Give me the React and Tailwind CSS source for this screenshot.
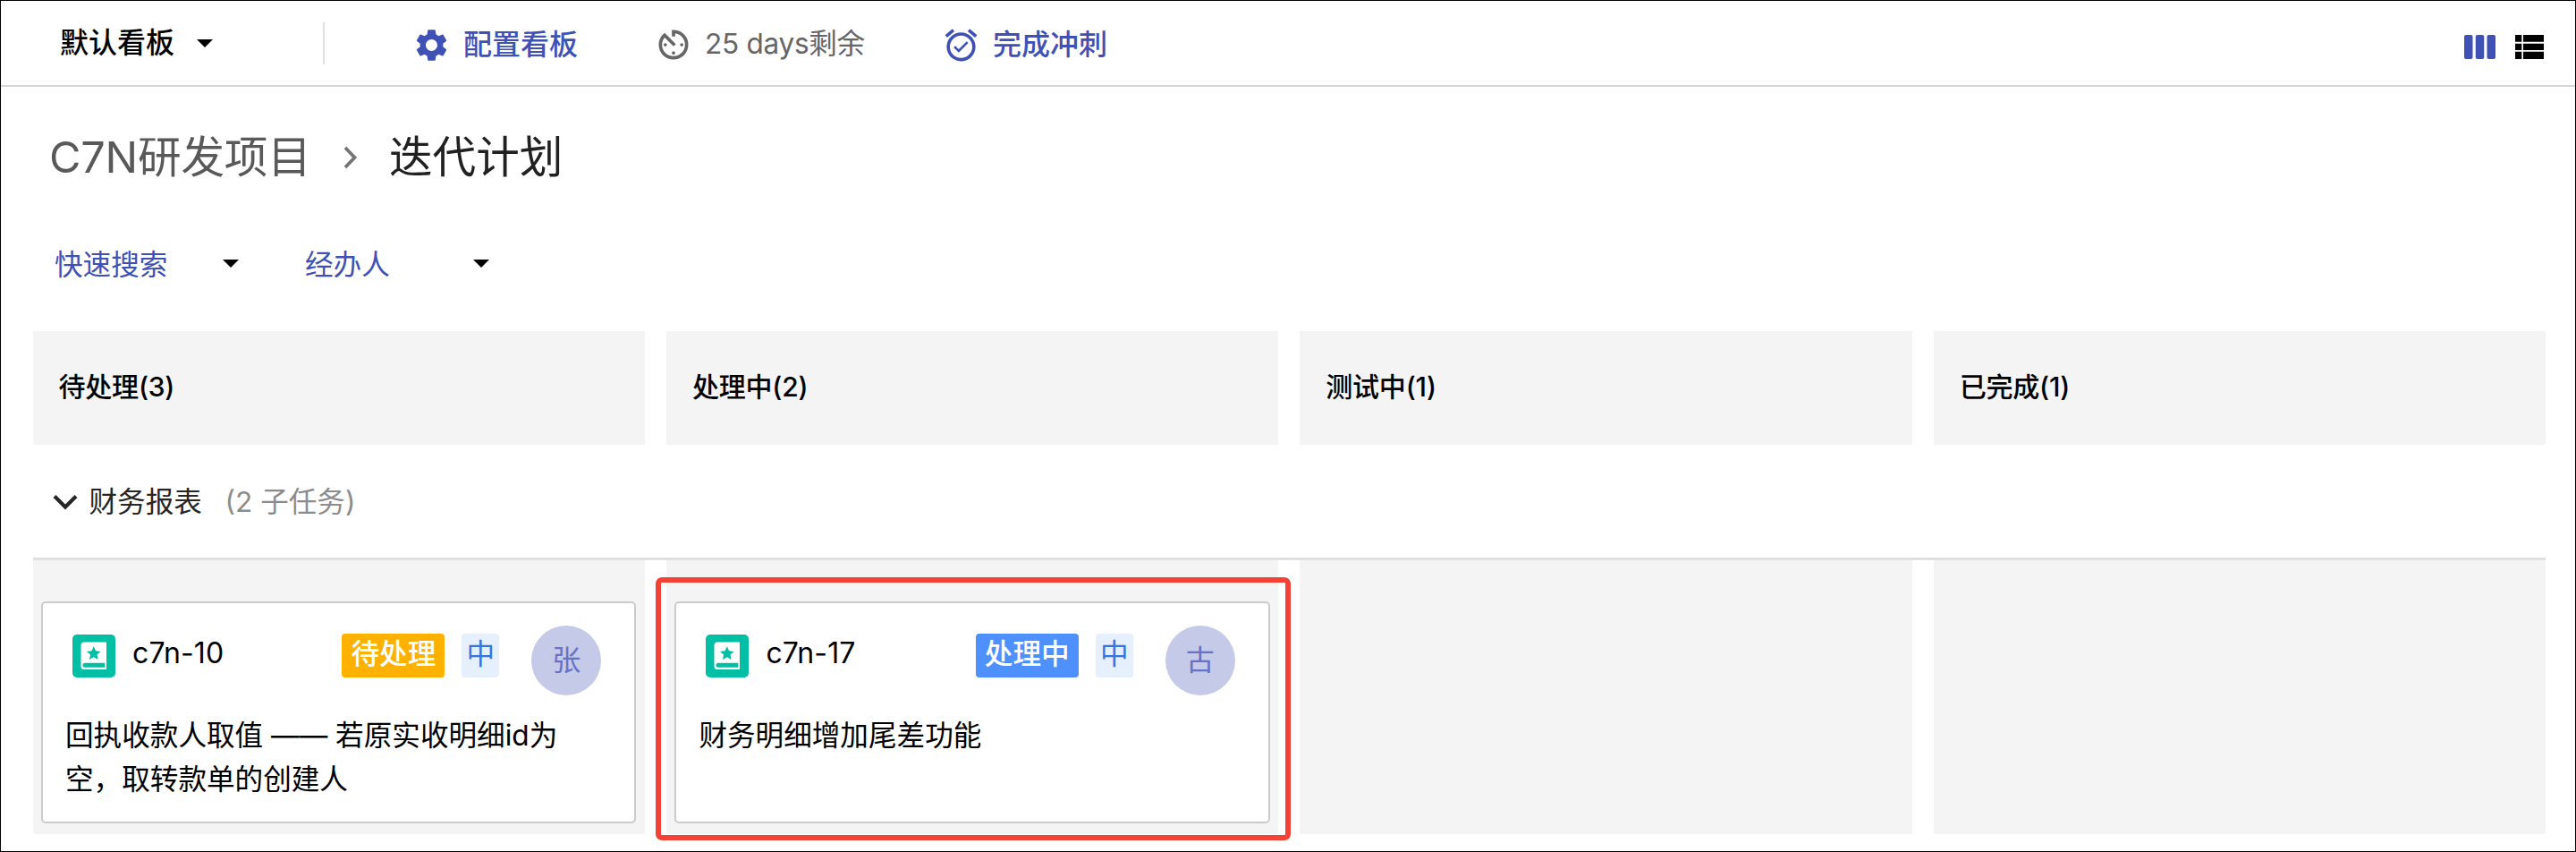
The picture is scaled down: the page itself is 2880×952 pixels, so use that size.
import { MdAlarmOn, MdAvTimer, MdSettings } from "react-icons/md";

const columns = ["待处理(3)", "处理中(2)", "测试中(1)", "已完成(1)"];

function Caret({ className = "" }) {
  return (
    <svg className={`h-[9px] w-[18px] shrink-0 ${className}`} viewBox="0 0 18 9">
      <path d="M0 0h18L9 9z" fill="#000" />
    </svg>
  );
}

function StoryIcon() {
  return (
    <svg className="h-12 w-12 shrink-0" viewBox="0 0 48 48">
      <rect width="48" height="48" rx="5" fill="#00bfa5" />
      <path
        d="M13 8.500h25V39H13a3.500 3.500 0 0 1-3.500-3.500V12A3.500 3.500 0 0 1 13 8.500z"
        fill="#fff"
      />
      <path d="M14 31.700h22.300v5H14a2.500 2.500 0 0 1 0-5z" fill="#00bfa5" />
      <path
        d="M23.800 13.300l2.300 5 5.500.6-4.100 3.700 1.200 5.500-4.900-2.800-4.900 2.800 1.200-5.500-4.100-3.700 5.500-.6z"
        fill="#00bfa5"
      />
    </svg>
  );
}

function Card({ id, status, statusClass, owner, children }) {
  return (
    <article className="mx-[9.500px] mt-[46px] h-[248px] rounded-[5px] border-2 border-[#cbcbcb] bg-white">
      <div className="mt-[25px] flex h-[78px] items-center pl-[33px] pr-[37px]">
        <div className="flex flex-1 items-center pb-[11px]">
          <StoryIcon />
          <span className="ml-[19px] h-12 text-[32px] leading-[42px] tracking-[0.1px]">{id}</span>
          <span
            className={`ml-auto flex h-[49px] w-[115px] items-center justify-center rounded-[4px] pb-[3px] text-[31.600px] font-medium text-white ${statusClass}`}
          >
            {status}
          </span>
          <span className="ml-[19px] mr-[36px] flex h-[49px] w-[42px] items-center justify-center rounded-[4px] bg-[#e6effc] pb-[3px] text-[31.600px] text-[#3575df]">
            中
          </span>
        </div>
        <span className="flex h-[78px] w-[78px] items-center justify-center rounded-full bg-[#c5cae9] text-[32px] text-[#6473c3]">
          {owner}
        </span>
      </div>
      <p className="ml-[25px] mt-[20px] text-[31.600px] leading-[49px]">{children}</p>
    </article>
  );
}

export default function App() {
  return (
    <div className="h-[952px] w-[2880px] overflow-hidden border border-black bg-white font-['Inter','Noto_Sans_CJK_SC',sans-serif] text-black">
      <header className="flex h-24 items-center border-b-2 border-[#d5d5d5] text-[32px] leading-[48px] whitespace-nowrap">
        <span className="ml-[66px] w-[128px] font-medium">默认看板</span>
        <Caret className="ml-[25px]" />
        <span className="ml-[123px] h-[47px] w-[2px] bg-[#e0e0e0]" />
        <button className="ml-[98px] flex items-center font-medium text-[#3f51b5]">
          <MdSettings className="mt-[4px] size-[43px]" />
          <span className="ml-[14px] mt-[4px] w-[128px]">配置看板</span>
        </button>
        <span className="ml-[85px] flex items-center text-[#666]">
          <MdAvTimer className="mt-[4px] size-[44px]" />
          <span className="ml-[13px] mt-[1px] w-[180px] text-[31.600px] tracking-[-0.3px]">25 days剩余</span>
        </span>
        <button className="ml-[85px] flex items-center font-medium text-[#3f51b5]">
          <MdAlarmOn className="mt-[4px] size-[43px]" />
          <span className="ml-[14px] mt-[4px] w-[128px]">完成冲刺</span>
        </button>
        <div className="ml-auto mr-[35px] mt-[9px] flex items-center gap-[22px]">
          <svg className="h-[27px] w-[35px]" viewBox="0 0 35 27" fill="#3f51b5">
            <rect width="9.500" height="27" rx="2" />
            <rect x="12.750" width="9.500" height="27" rx="2" />
            <rect x="25.500" width="9.500" height="27" rx="2" />
          </svg>
          <svg className="h-[27px] w-[32px]" viewBox="0 0 32 27" fill="#000">
            <path d="M0 0h7.300v7.700H0zM9 0h23v7.700H9zM0 9.700h7.300v7.300H0zM9 9.700h23V17H9zM0 18.700h7.300V27H0zM9 18.700h23V27H9z" />
          </svg>
        </div>
      </header>

      <nav className="mt-[43px] flex h-[72px] items-center pl-[54px] text-[48.600px] leading-[72px]">
        <span className="w-[289px] tracking-[-0.2px] whitespace-nowrap text-[#595959]">C7N研发项目</span>
        <svg className="ml-[40px] h-[26px] w-[16px]" viewBox="0 0 16 26" fill="none">
          <path d="M2 2l10.500 11L2 24" stroke="#757575" strokeWidth="3.800" />
        </svg>
        <span className="ml-[35px] text-[#212121]">迭代计划</span>
      </nav>

      <div className="mt-[60px] flex h-12 items-center pl-[60px] text-[31.600px] leading-[48px] text-[#3f51b5]">
        <span className="w-[128px]">快速搜索</span>
        <Caret className="mb-[3px] ml-[60px]" />
        <span className="ml-[74px] w-[96px]">经办人</span>
        <Caret className="mb-[3px] ml-[92px]" />
      </div>

      <main className="ml-[35.500px] mt-[50px] w-[2809.500px]">
        <div className="grid grid-cols-4 gap-6">
          {columns.map((title) => (
            <div
              key={title}
              className="flex h-[127px] items-center bg-[#f4f4f4] pb-[2px] pl-[29px] text-[30px] font-medium tracking-[-0.2px] first:rounded-bl-[4px] last:rounded-br-[4px]"
            >
              {title}
            </div>
          ))}
        </div>
        <div className="flex h-[129px] items-center border-b-[3px] border-[#e0e0e0] pt-[2px] text-[31.600px] text-[#262626]">
          <svg className="ml-[22px] h-[18px] w-[28px]" viewBox="0 0 28 18" fill="none">
            <path d="M2 2.500l12 12 12-12" stroke="#262626" strokeWidth="4.200" />
          </svg>
          <span className="ml-[13px] w-[128px]">财务报表</span>
          <span className="ml-[24px] text-[#8c8c8c]">(2 子任务)</span>
        </div>
        <div className="grid grid-cols-4 gap-6">
          <section className="h-[306px] overflow-hidden rounded-bl-[4px] bg-[#f4f4f4]">
            <Card id="c7n-10" status="待处理" statusClass="bg-[#ffb100]" owner="张">
              回执收款人取值 —— 若原实收明细id为
              <br />
              空，取转款单的创建人
            </Card>
          </section>
          <section className="relative h-[306px] bg-[#f4f4f4]">
            <div className="overflow-hidden">
              <Card id="c7n-17" status="处理中" statusClass="bg-[#4d90fe]" owner="古">
                财务明细增加尾差功能
              </Card>
            </div>
            <div className="pointer-events-none absolute -left-[12px] top-[19px] h-[294px] w-[710px] rounded-[7px] border-[6px] border-[#f44336]" />
          </section>
          <section className="h-[306px] bg-[#f4f4f4]" />
          <section className="h-[306px] rounded-br-[4px] bg-[#f4f4f4]" />
        </div>
      </main>
    </div>
  );
}
